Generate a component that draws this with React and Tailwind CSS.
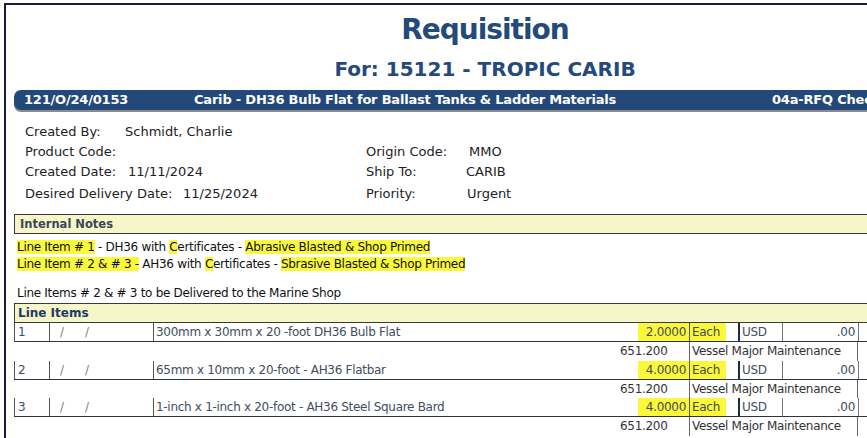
import React from "react";

const HL = "bg-[#fbf839]";

// one requisition line + its account sub-row
function LineItem({ no, desc, qty }) {
  return (
    <>
      <div className="flex h-[19px] border-b border-[#2c3440] text-[12px] leading-[18px] tracking-[-0.3px] text-[#424c5e]">
        <div className="w-[35px] shrink-0 border-l border-[#555] pl-[3px]">{no}</div>
        <div className="flex w-[104px] shrink-0 border-l border-[#555] pl-[10px] text-[#7d8590]">
          <span className="w-[25px]">/</span>
          <span>/</span>
        </div>
        <div className="w-[447px] shrink-0 border-l border-[#555] pl-[2px] whitespace-nowrap">{desc}</div>
        <div className="flex w-[89px] shrink-0 justify-end">
          <span className={`${HL} h-full pl-[8px] pr-[3px]`}>{qty}</span>
        </div>
        <div className="w-[49px] shrink-0 border-l border-[#555]">
          <span className={`${HL} inline-block h-full pl-[2px] pr-[6px]`}>Each</span>
        </div>
        <div className="w-[44px] shrink-0 border-l-2 border-[#1e2b44] pl-[2px]">USD</div>
        <div className="w-[76px] shrink-0 border-l border-[#777] pr-[3px] text-right">.00</div>
        <div className="flex-1 border-l border-[#777]"></div>
      </div>
      <div className="flex h-[18.5px] text-[12px] leading-[18px] tracking-[-0.3px] text-[#333]">
        <div className="w-[586px] shrink-0"></div>
        <div className="w-[89px] shrink-0 pl-[20px]">651.200</div>
        <div className="w-[169px] shrink-0 border-x border-[#666] pl-[2px] whitespace-nowrap">Vessel Major Maintenance</div>
      </div>
    </>
  );
}

export default function App() {
  return (
    <div className="h-[438px] w-[867px] overflow-hidden bg-white font-['DejaVu_Sans',sans-serif]">
      <div className="ml-[4px] mt-[3px] h-[460px] w-[960px] border-l-2 border-t-2 border-[#1c1c3c]">
        {/* Title */}
        <h1 className="pt-[7px] text-center text-[28px] font-bold leading-[36px] tracking-[-1px] text-[#234a7b]">Requisition</h1>
        <h2 className="mt-[9px] text-center text-[20px] font-bold leading-[24px] text-[#234a7b]">For: 15121 - TROPIC CARIB</h2>

        {/* Header bar */}
        <div className="ml-[8px] mt-[9px] flex h-[20px] items-center rounded-l-[7px] bg-[#23487a] pl-[10px] text-[13px] font-bold leading-[20px] tracking-[-0.2px] text-white shadow-[0_2px_0_#8b8b8b] whitespace-nowrap">
          <span className="w-[170px] shrink-0">121/O/24/0153</span>
          <span className="w-[578px] shrink-0">Carib - DH36 Bulb Flat for Ballast Tanks &amp; Ladder Materials</span>
          <span>04a-RFQ Checklist</span>
        </div>

        {/* Details */}
        <div className="mt-[12px] pl-[19px] text-[13px] leading-[20px] text-[#222] whitespace-nowrap">
          <div className="flex h-[20px]">
            <span className="w-[100px]">Created By:</span>
            <span>Schmidt, Charlie</span>
          </div>
          <div className="flex h-[20px]">
            <span className="w-[341px]">Product Code:</span>
            <span className="w-[103px]">Origin Code:</span>
            <span>MMO</span>
          </div>
          <div className="flex h-[20px]">
            <span className="w-[103px]">Created Date:</span>
            <span className="w-[238px]">11/11/2024</span>
            <span className="w-[100px]">Ship To:</span>
            <span>CARIB</span>
          </div>
          <div className="mt-[2px] flex h-[20px]">
            <span className="w-[158px]">Desired Delivery Date:</span>
            <span className="w-[183px]">11/25/2024</span>
            <span className="w-[101px]">Priority:</span>
            <span>Urgent</span>
          </div>
        </div>

        {/* Internal notes */}
        <div className="ml-[8px] mt-[10px] h-[20px] border-y border-l border-[#3a3a3a] bg-[#f6f6c9] pl-[5px] text-[11.5px] font-bold leading-[18px] text-[#38475a]">
          Internal Notes
        </div>
        <div className="mt-[5px] pl-[11px] text-[12px] leading-[17px] tracking-[-0.3px] text-[#111] whitespace-nowrap">
          <div>
            <span className={HL}>Line Item # 1</span> - DH36 with <span className={HL}>C</span>ertificates -{" "}
            <span className={HL}>Abrasive Blasted &amp; Shop Primed</span>
          </div>
          <div>
            <span className={HL}>Line Item # 2 &amp; # 3 -</span> AH36 with <span className={HL}>C</span>ertificates -{" "}
            <span className={HL}>Sbrasive Blasted &amp; Shop Primed</span>
          </div>
          <div className="h-[12px]"></div>
          <div>Line Items # 2 &amp; # 3 to be Delivered to the Marine Shop</div>
        </div>

        {/* Line items */}
        <div className="ml-[8px] mt-[1px] h-[20px] border-y border-l border-[#3a3a3a] bg-[#f6f6c9] pl-[3px] text-[12px] font-bold leading-[18px] text-[#1f3b63]">
          Line Items
        </div>
        <div className="ml-[8px]">
          <LineItem no="1" desc="300mm x 30mm x 20 -foot DH36 Bulb Flat" qty="2.0000" />
          <LineItem no="2" desc="65mm x 10mm x 20-foot - AH36 Flatbar" qty="4.0000" />
          <LineItem no="3" desc="1-inch x 1-inch x 20-foot - AH36 Steel Square Bard" qty="4.0000" />
        </div>
      </div>
    </div>
  );
}
